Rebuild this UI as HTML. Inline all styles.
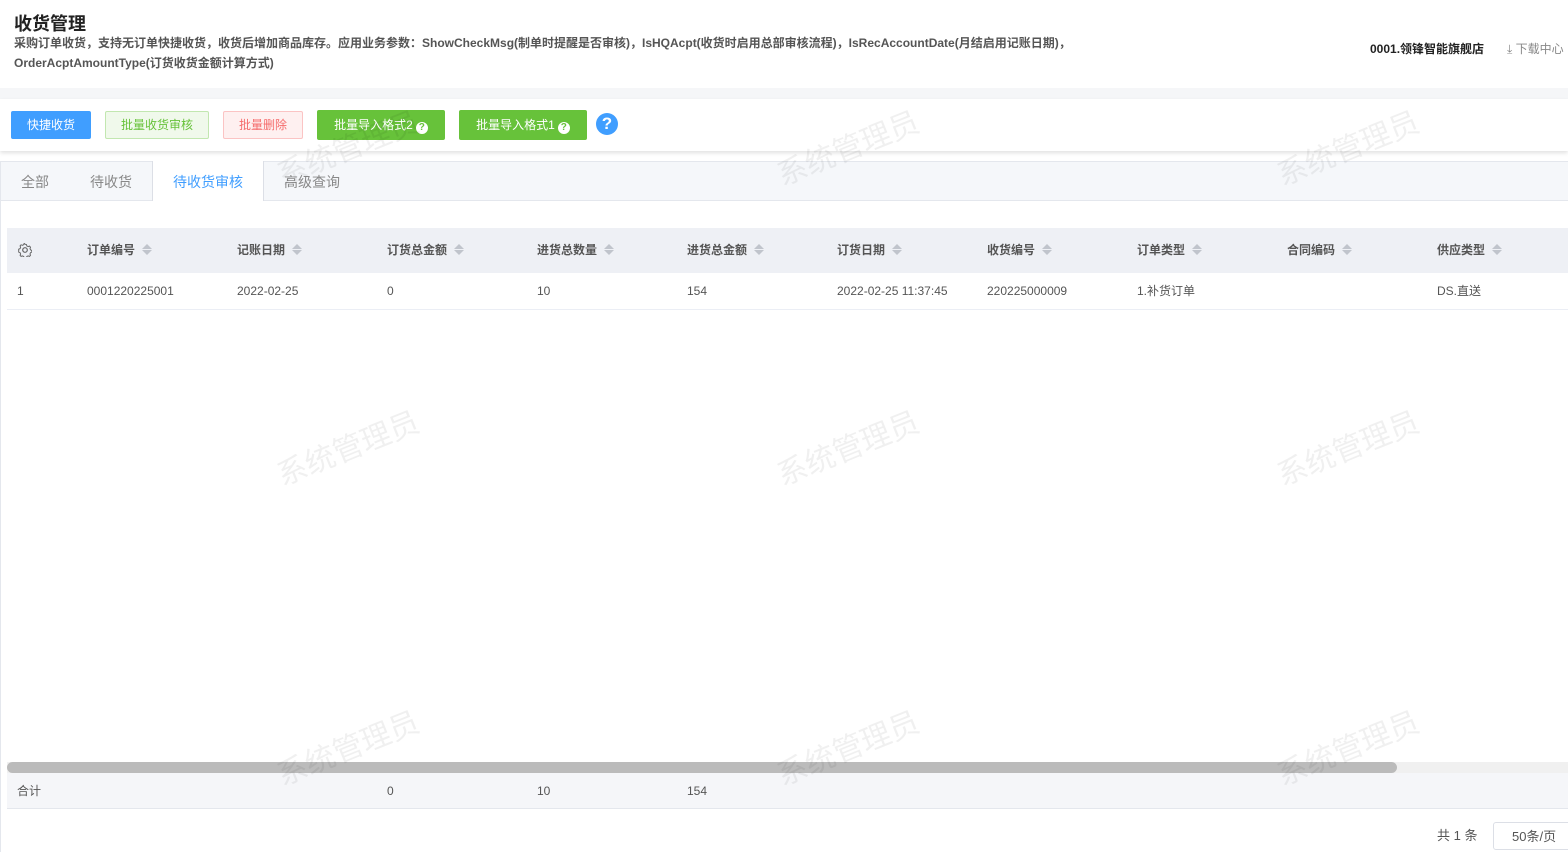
<!DOCTYPE html>
<html><head><meta charset="utf-8"><style>
*{margin:0;padding:0;box-sizing:border-box}
body{width:1568px;height:852px;overflow:hidden;background:#fff;font-family:"Liberation Sans","Noto Sans CJK SC",sans-serif;color:#333;position:relative}
.abs{position:absolute}
h1{position:absolute;left:14px;top:10px;font-size:18px;font-weight:bold;color:#222}
.desc{position:absolute;left:14px;top:33px;font-size:12px;font-weight:bold;color:#555;line-height:20px;width:1080px}
.btn{position:absolute;top:111px;height:28px;font-size:12px;line-height:26px;text-align:center;border-radius:2px;border:1px solid}
.q{display:inline-block;width:12px;height:12px;border-radius:50%;background:#fff;color:#67c23a;font-size:10px;line-height:12px;font-weight:bold;vertical-align:-1px;margin-left:3px}
.th{position:absolute;top:241px;font-size:12px;font-weight:bold;color:#555}
.s{position:absolute;width:0;height:0;border-left:5px solid transparent;border-right:5px solid transparent;border-top:5px solid #c0c4cc}
.th:after{content:"";display:inline-block;width:0;height:0;margin-left:7px;border-left:5px solid transparent;border-right:5px solid transparent;border-bottom:5px solid #c0c4cc;vertical-align:5px}
.td{position:absolute;font-size:12px;color:#555}
.wm{position:absolute;font-size:30px;color:rgba(0,0,0,0.06);transform:rotate(-22deg);white-space:nowrap}
</style></head><body>
<h1>收货管理</h1>
<div class="desc">采购订单收货，支持无订单快捷收货，收货后增加商品库存。应用业务参数：ShowCheckMsg(制单时提醒是否审核)，IsHQAcpt(收货时启用总部审核流程)，IsRecAccountDate(月结启用记账日期)，OrderAcptAmountType(订货收货金额计算方式)</div>
<div class="abs" style="left:1370px;top:40px;font-size:12px;font-weight:bold;color:#222">0001.领锋智能旗舰店</div>
<div class="abs" style="left:1507px;top:40px;font-size:12px;color:#888">⤓ 下载中心</div>
<div class="abs" style="left:0;top:88px;width:1568px;height:11px;background:#f5f6f8"></div>
<div class="abs" style="left:0;top:99px;width:1568px;height:52px;background:#fff;box-shadow:0 2px 4px rgba(0,0,0,0.12)"></div>
<div class="btn" style="left:11px;width:80px;background:#409eff;border-color:#409eff;color:#fff">快捷收货</div>
<div class="btn" style="left:105px;width:104px;background:#f0f9eb;border-color:#c2e7b0;color:#67c23a">批量收货审核</div>
<div class="btn" style="left:223px;width:80px;background:#fef0f0;border-color:#fbc4c4;color:#f56c6c">批量删除</div>
<div class="btn" style="left:317px;top:110px;height:30px;line-height:28px;width:128px;background:#67c23a;border-color:#67c23a;color:#fff">批量导入格式2<span class="q">?</span></div>
<div class="btn" style="left:459px;top:110px;height:30px;line-height:28px;width:128px;background:#67c23a;border-color:#67c23a;color:#fff">批量导入格式1<span class="q">?</span></div>
<div class="abs" style="left:596px;top:113px;width:22px;height:22px;border-radius:50%;background:#409eff;color:#fff;font-size:17px;font-weight:bold;text-align:center;line-height:22px">?</div>
<div class="abs" style="left:0;top:161px;width:1568px;height:40px;background:#f5f7fa;border-top:1px solid #e4e7ed;border-bottom:1px solid #e4e7ed;border-left:1px solid #e4e7ed"></div>
<div class="abs" style="left:152px;top:161px;width:112px;height:40px;background:#fff;border-left:1px solid #dcdfe6;border-right:1px solid #dcdfe6"></div>
<div class="abs" style="left:21px;top:172px;font-size:14px;color:#888">全部</div>
<div class="abs" style="left:90px;top:172px;font-size:14px;color:#888">待收货</div>
<div class="abs" style="left:173px;top:172px;font-size:14px;color:#409eff">待收货审核</div>
<div class="abs" style="left:284px;top:172px;font-size:14px;color:#888">高级查询</div>
<div class="abs" style="left:0;top:201px;width:1px;height:651px;background:#e4e7ed"></div>
<div class="abs" style="left:7px;top:228px;width:1561px;height:45px;background:#eef0f5"></div>
<svg class="abs" style="left:18px;top:243px" width="14" height="14" viewBox="0 0 14 14"><circle cx="7" cy="7" r="2.3" fill="none" stroke="#666" stroke-width="1.2"/><path d="M7 1.2l1.4.3.4 1.4 1.3.7 1.4-.5 1 1.1-.5 1.4.5 1.2 1.3.7v1.6l-1.3.6-.5 1.3.5 1.3-1 1.1-1.4-.5-1.3.6-.4 1.4H6.2l-.5-1.4-1.2-.6-1.4.5-1-1.1.5-1.3-.5-1.3-1.4-.6V6.2l1.4-.6.5-1.3-.5-1.4 1-1.1 1.4.5 1.2-.6.5-1.4z" fill="none" stroke="#666" stroke-width="1"/></svg>
<div class="th" style="left:87px">订单编号</div><div class="th" style="left:237px">记账日期</div><div class="th" style="left:387px">订货总金额</div><div class="th" style="left:537px">进货总数量</div><div class="th" style="left:687px">进货总金额</div><div class="th" style="left:837px">订货日期</div><div class="th" style="left:987px">收货编号</div><div class="th" style="left:1137px">订单类型</div><div class="th" style="left:1287px">合同编码</div><div class="th" style="left:1437px">供应类型</div>
<div class="s" style="left:142px;top:250px"></div><div class="s" style="left:292px;top:250px"></div><div class="s" style="left:454px;top:250px"></div><div class="s" style="left:604px;top:250px"></div><div class="s" style="left:754px;top:250px"></div><div class="s" style="left:892px;top:250px"></div><div class="s" style="left:1042px;top:250px"></div><div class="s" style="left:1192px;top:250px"></div><div class="s" style="left:1342px;top:250px"></div><div class="s" style="left:1492px;top:250px"></div>
<div class="abs" style="left:7px;top:309px;width:1561px;height:1px;background:#ebeef5"></div>
<div class="td" style="left:17px;top:284px">1</div><div class="td" style="left:87px;top:284px">0001220225001</div><div class="td" style="left:237px;top:284px">2022-02-25</div><div class="td" style="left:387px;top:284px">0</div><div class="td" style="left:537px;top:284px">10</div><div class="td" style="left:687px;top:284px">154</div><div class="td" style="left:837px;top:284px">2022-02-25 11:37:45</div><div class="td" style="left:987px;top:284px">220225000009</div><div class="td" style="left:1137px;top:282px">1.补货订单</div><div class="td" style="left:1437px;top:282px">DS.直送</div>
<div class="abs" style="left:7px;top:762px;width:1561px;height:11px;background:#f0f0f0"></div>
<div class="abs" style="left:7px;top:762px;width:1390px;height:11px;background:#bbb;border-radius:6px"></div>
<div class="abs" style="left:7px;top:773px;width:1561px;height:36px;background:#f5f6f9;border-bottom:1px solid #e4e7ed"></div>
<div class="td" style="left:17px;top:782px">合计</div><div class="td" style="left:387px;top:784px">0</div><div class="td" style="left:537px;top:784px">10</div><div class="td" style="left:687px;top:784px">154</div>
<div class="td" style="left:1437px;top:825px;font-size:13px">共 1 条</div>
<div class="abs" style="left:1493px;top:822px;width:80px;height:28px;border:1px solid #dcdfe6;border-radius:3px;font-size:13px;color:#555;padding:3px 0 0 18px">50条/页</div>
<div class="wm" style="left:272px;top:124px">系统管理员</div><div class="wm" style="left:772px;top:124px">系统管理员</div><div class="wm" style="left:1272px;top:124px">系统管理员</div>
<div class="wm" style="left:272px;top:424px">系统管理员</div><div class="wm" style="left:772px;top:424px">系统管理员</div><div class="wm" style="left:1272px;top:424px">系统管理员</div>
<div class="wm" style="left:272px;top:724px">系统管理员</div><div class="wm" style="left:772px;top:724px">系统管理员</div><div class="wm" style="left:1272px;top:724px">系统管理员</div>
</body></html>
